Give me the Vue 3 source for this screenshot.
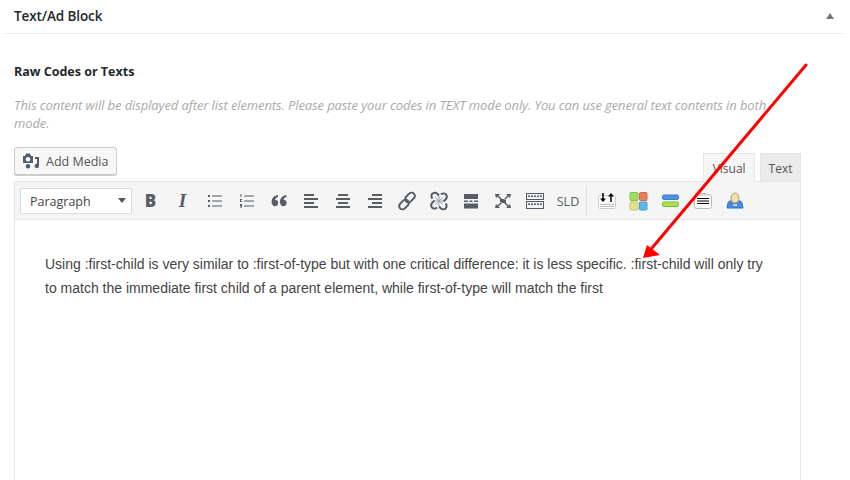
<script setup>
const tools = ['bold', 'italic', 'ul', 'ol', 'quote', 'left', 'center', 'right', 'link', 'unlink', 'more', 'full', 'kbd']
</script>

<template>
  <div class="page">
    <header class="head">
      <h2 class="title">Text/Ad Block</h2>
      <span class="caret"></span>
    </header>
    <section class="body">
      <h3 class="label">Raw Codes or Texts</h3>
      <p class="desc">This content will be displayed after list elements. Please paste your codes in TEXT mode only. You can use general text contents in both mode.</p>
      <div class="bar">
        <button class="media">
          <svg width="18" height="18" viewBox="0 0 18 18"><path fill="#555d66" fill-rule="evenodd" d="M1 4h2l1-2.500h4L9 4h2v7H1zM6 5a2.300 2.300 0 1 0 .01 0z"/><path fill="#555d66" d="M13 5h4v9a2.200 2.200 0 1 1-2-2.200V7h-2zM6 12a2.300 2.300 0 1 1-.01 0z"/></svg>
          <span>Add Media</span>
        </button>
        <div class="tabs">
          <span class="tab active">Visual</span>
          <span class="tab">Text</span>
        </div>
      </div>
      <div class="editor">
        <div class="toolbar">
          <div class="select"><span>Paragraph</span><i></i></div>
          <div v-for="t in tools" :key="t" class="tool">
            <span v-if="t === 'bold'" class="glyph b">B</span>
            <span v-else-if="t === 'italic'" class="glyph i">I</span>
            <svg v-else width="20" height="20" viewBox="0 0 20 20" fill="#555d66">
              <template v-if="t === 'ul'"><path d="M3 4h2v2H3zM3 9h2v2H3zM3 14h2v2H3zM7 4.500h10v1H7zM7 9.500h10v1H7zM7 14.500h10v1H7z"/></template>
              <template v-if="t === 'ol'"><path d="M3.500 3h1v3h-1zM3 8h2v1H4v1h1v1H3zM3 13h2v3.500H3v-1h1v-.500H3zM7 4.500h10v1H7zM7 9.500h10v1H7zM7 14.500h10v1H7z"/></template>
              <template v-if="t === 'quote'"><path d="M9 4v2C7 6.500 6.300 7.700 6.300 9c2.200 0 2.900 1.300 2.900 3 0 1.800-1.200 3.200-3.200 3.200S2.600 13.500 2.600 11c0-3.800 2.600-6.600 6.400-7zM17.400 4v2c-2 .5-2.700 1.700-2.700 3 2.200 0 2.900 1.300 2.900 3 0 1.800-1.200 3.200-3.200 3.200S11 13.500 11 11c0-3.800 2.600-6.600 6.400-7z"/></template>
              <template v-if="t === 'left'"><path d="M3 3h10v2H3zM3 7h14v2H3zM3 11h10v2H3zM3 15h14v2H3z"/></template>
              <template v-if="t === 'center'"><path d="M5 3h10v2H5zM3 7h14v2H3zM5 11h10v2H5zM3 15h14v2H3z"/></template>
              <template v-if="t === 'right'"><path d="M7 3h10v2H7zM3 7h14v2H3zM7 11h10v2H7zM3 15h14v2H3z"/></template>
              <template v-if="t === 'link'"><g fill="none" stroke="#555d66" stroke-width="2"><rect x="9.700" y="1" width="6.600" height="11" rx="3.300" transform="rotate(45 13 6.500)"/><rect x="3.700" y="8" width="6.600" height="11" rx="3.300" transform="rotate(45 7 13.500)"/></g></template>
              <template v-if="t === 'unlink'"><g fill="none" stroke="#555d66" stroke-width="2"><path d="M12 3.500a3 3 0 0 1 5 4.500L14.500 10.500"/><path d="M8 16.500a3 3 0 0 1-5-4.500L5.500 9.500"/><path d="M3.500 7.500a3 3 0 0 1 4.500-5L10 4.500"/><path d="M16.500 12.500a3 3 0 0 1-4.500 5L10 15.500"/></g><path d="M10 5v10M5 10h10M6.500 6.500l7 7M13.500 6.500l-7 7" stroke="#9aa0a6" stroke-width="1"/></template>
              <template v-if="t === 'more'"><path d="M3 3h14v5H3zM3 9.500h4v1.500H3zM8.500 9.500h3v1.500h-3zM13 9.500h4v1.500h-4zM3 12.500h14v5H3z"/></template>
              <template v-if="t === 'full'"><path d="M7 8h6v4H7zM2 3h5L5.500 4.500 9 8 8 9 4.500 5.500 3 7zM18 3h-5l1.500 1.500L11 8l1 1 3.500-3.500L17 7zM2 17h5l-1.500-1.500L9 12l-1-1-3.500 3.500L3 13zM18 17h-5l1.500-1.500L11 12l1-1 3.500 3.500L17 13z"/></template>
              <template v-if="t === 'kbd'"><path fill-rule="evenodd" d="M1 2h18v7H1zM2 3v5h16V3zM3 4.500h2V6H3zM6 4.500h2V6H6zM9 4.500h2V6H9zM12 4.500h2V6h-2zM15 4.500h2V6h-2zM1 10h18v8H1zM2 11v6h16v-6zM3 12.500h2V14H3zM6 12.500h2V14H6zM9 12.500h2V14H9zM12 12.500h2V14h-2zM15 12.500h2V14h-2z"/></template>
            </svg>
          </div>
          <span class="sld">SLD</span>
          <span class="sep"></span>
          <div class="tool">
            <svg width="20" height="20" viewBox="0 0 20 20"><rect x="1.500" y="4.500" width="17" height="13" rx="2" fill="#fff" stroke="#ccc"/><path d="M3 13.500h14M3 15.500h14" stroke="#bbb"/><path d="M6 2v7" stroke="#000" stroke-width="1.500"/><path d="M3 7.500l3 3.500 3-3.500z" fill="#000"/><path d="M14 11V4" stroke="#000" stroke-width="1.500"/><path d="M11 5.500L14 2l3 3.500z" fill="#000"/></svg>
          </div>
          <div class="tool">
            <svg width="20" height="20" viewBox="0 0 20 20"><rect x="1" y="1.500" width="8" height="8" rx="1" fill="#9be05f" stroke="#8cc152"/><rect x="10.500" y="1.500" width="7.500" height="8" rx="1" fill="#ec7b5a" stroke="#cf6a4e"/><rect x="1" y="11" width="8" height="8" rx="1" fill="#e6e08a" stroke="#c9c572"/><rect x="10.500" y="11" width="7.500" height="8" rx="1" fill="#5cb8ec" stroke="#4a9fd0"/></svg>
          </div>
          <div class="tool">
            <svg width="20" height="20" viewBox="0 0 20 20"><rect x="1.500" y="4" width="16" height="4.500" rx="1.500" fill="#4f93e0" stroke="#3b7cc4"/><rect x="1.500" y="11" width="16" height="4.500" rx="1.500" fill="#a8e34a" stroke="#82b83a"/></svg>
          </div>
          <div class="tool">
            <svg width="20" height="20" viewBox="0 0 20 20"><path d="M7 4V2.500h6V4" fill="none" stroke="#bbb"/><rect x="1.500" y="4" width="17" height="13.500" rx="2" fill="#fff" stroke="#bbb"/><path d="M4 7.500h12M4 10h12M4 12.500h12" stroke="#000" stroke-width="1.200"/></svg>
          </div>
          <div class="tool">
            <svg width="20" height="20" viewBox="0 0 20 20"><path d="M2 17l1-5c.3-1.200 1-2 2-2h10c1 0 1.700.8 2 2l1 5z" fill="#4a88dc" stroke="#356fb8"/><ellipse cx="10" cy="7" rx="4" ry="5" fill="#f1dfae" stroke="#b89f62"/><rect x="8" y="13.500" width="4" height="1.500" fill="#d5e5f7"/></svg>
          </div>
        </div>
        <div class="content">
          <p>Using :first-child is very similar to :first-of-type but with one critical difference: it is less specific. :first-child will only try to match the immediate first child of a parent element, while first-of-type will match the first</p>
        </div>
      </div>
    </section>
    <svg class="arrow" width="850" height="480" viewBox="0 0 850 480">
      <path d="M806 65L652 248" stroke="#ff0000" stroke-width="3" stroke-linecap="round"/>
      <path d="M643 258L647 245L660 255Z" fill="#ff0000"/>
    </svg>
  </div>
</template>

<style>
html, body { margin: 0; background: #fff; overflow: hidden; }
</style>

<style scoped>
.page { position: relative; width: 850px; height: 480px; overflow: hidden; background: #fff; font-family: "Open Sans", "Noto Sans", sans-serif; color: #23282d; }
.head { display: flex; align-items: center; justify-content: space-between; height: 33px; margin: 0 5px 0 4px; padding: 0 10px; border-bottom: 1px solid #eee; }
.title { margin: 0 0 1px; font-size: 13.500px; font-weight: 600; letter-spacing: -.1px; }
.caret { width: 0; height: 0; border-left: 4px solid transparent; border-right: 4px solid transparent; border-bottom: 6px solid #72777c; margin-right: 1px; margin-bottom: 2px; }
.body { padding: 0 49px 0 14px; }
.label { margin: 30px 0 0; font-size: 12.500px; line-height: 16px; font-weight: 700; color: #23282d; }
.desc { margin: 16px 0 0; font-size: 13px; line-height: 18px; font-style: italic; color: #aaa; width: 760px; letter-spacing: -.1px; }
.bar { display: flex; justify-content: space-between; align-items: flex-end; margin-top: 15px; height: 34px; width: 787px; }
.media { display: flex; align-items: center; gap: 6px; width: 103px; height: 28px; margin-bottom: 6px; padding: 0 7px 0 7px; border: 1px solid #ccc; border-radius: 3px; background: #f7f7f7; box-shadow: 0 1px 0 #ccc; color: #555; font: 12.500px/1 "Open Sans", sans-serif; box-sizing: border-box; }
.media span { padding-top: 2px; }
.tabs { display: flex; gap: 5px; align-items: flex-end; }
.tab { display: block; height: 27px; line-height: 30px; padding: 0 7.500px; font-size: 12px; color: #555; background: #ebebeb; border: 1px solid #e5e5e5; border-bottom: 0; }
.tab.active { padding: 0 8.500px; height: 28px; background: #f5f5f5; margin-bottom: -1px; position: relative; }
.editor { width: 787px; box-sizing: border-box; border: 1px solid #e5e5e5; border-bottom: 0; height: 300px; }
.toolbar { display: flex; align-items: center; height: 37px; padding-left: 5px; background: #f5f5f5; border-bottom: 1px solid #e5e5e5; }
.select { display: flex; align-items: center; justify-content: space-between; width: 112px; height: 26px; padding: 0 4px 0 9px; margin-right: 3px; background: #fff; border: 1px solid #ddd; box-sizing: border-box; font-size: 12.500px; color: #444; }
.select span { padding-top: 1px; }
.select i { width: 0; height: 0; border-left: 4.500px solid transparent; border-right: 4.500px solid transparent; border-top: 5px solid #555; margin-right: 1px; }
.tool { display: flex; align-items: center; justify-content: center; width: 32px; height: 26px; flex: none; }
.glyph { font-size: 17px; line-height: 1; color: #555d66; font-family: "Liberation Serif", serif; font-weight: 700; }
.glyph.b { font-family: "Open Sans", sans-serif; font-size: 17px; font-weight: 800; margin-left: -1px; }
.glyph.i { font-style: italic; font-size: 19px; margin-left: -1px; }
.sld { width: 32px; text-align: center; font-size: 12.500px; color: #555d66; flex: none; margin-left: 1px; padding-top: 1px; }
.sep { width: 1px; height: 30px; background: #e0e0e0; margin: 0 4px 0 2px; flex: none; }
.content { padding: 32px 30px; }
.content p { margin: 0; font: 14px/24px "Liberation Sans", Arial, sans-serif; color: #444; }
.arrow { position: absolute; left: 0; top: 0; pointer-events: none; }
</style>
